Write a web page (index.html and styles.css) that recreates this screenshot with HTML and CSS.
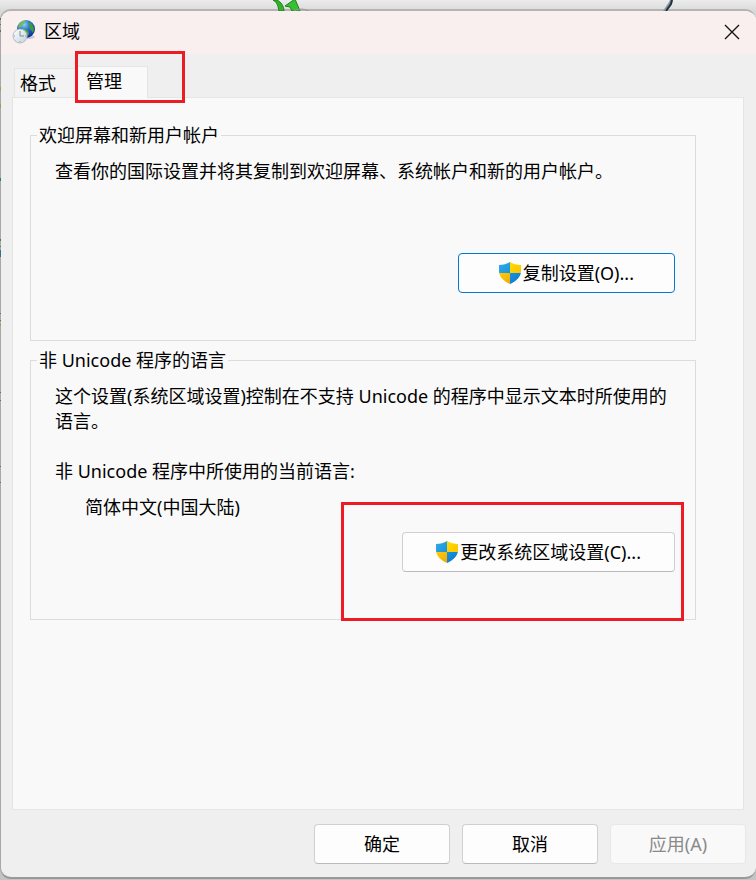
FILE: index.html
```html
<!DOCTYPE html>
<html lang="zh-CN">
<head>
<meta charset="utf-8">
<meta name="viewport" content="width=device-width, initial-scale=1">
<title>区域</title>
<link rel="stylesheet" href="styles.css">
</head>
<body>
<svg class="symbols" width="0" height="0" aria-hidden="true">
  <defs>
    <linearGradient id="blue" x1="0" y1="0" x2="1" y2="1"><stop offset="0" stop-color="#35a9e6"/><stop offset="1" stop-color="#1795df"/></linearGradient>
    <linearGradient id="deep" x1="0" y1="0" x2="1" y2="1"><stop offset="0" stop-color="#1793e4"/><stop offset="1" stop-color="#0b72c4"/></linearGradient>
    <linearGradient id="gold" x1="0" y1="0" x2="1" y2="1"><stop offset="0" stop-color="#ffdc00"/><stop offset="1" stop-color="#fcc400"/></linearGradient>
    <linearGradient id="amber" x1="0" y1="0" x2="1" y2="1"><stop offset="0" stop-color="#ffce05"/><stop offset="1" stop-color="#f0a80a"/></linearGradient>
    <clipPath id="shield-shape"><path d="M11 0C8 2 4 3 0 3V9C0 15 5 19.500 11 22C17 19.500 22 15 22 9V3C18 3 14 2 11 0Z"/></clipPath>
    <symbol id="shield" viewBox="0 0 22 22">
      <g clip-path="url(#shield-shape)">
        <rect width="11" height="11" fill="url(#blue)"/>
        <rect x="11" width="11" height="11" fill="url(#gold)"/>
        <rect y="11" width="11" height="11" fill="url(#amber)"/>
        <rect x="11" y="11" width="11" height="11" fill="url(#deep)"/>
      </g>
    </symbol>
  </defs>
</svg>
<svg class="desk-arrow" viewBox="0 0 40 11" aria-hidden="true">
  <path d="M1 0C6 3 6 7 7 11H12C12 6 9 2 5 0Z" fill="#32b22c" stroke="#217f20"/>
  <path d="M13 6L23 -1L28 11H20L18 7Z" fill="#39c032" stroke="#217f20"/>
  <path d="M22 11Q28 7 37 11" fill="none" stroke="#999"/>
</svg>
<svg class="desk-pen" viewBox="0 0 12 11" aria-hidden="true">
  <path d="M1 11L7 2L8 0H11L10 3L4 11Z" fill="#7f98a8"/>
  <path d="M4 11L9 4L10 0" fill="none" stroke="#26313a" stroke-width="2"/>
</svg>
<svg class="desk-edge" viewBox="0 0 1 500" aria-hidden="true">
  <path d="M.5 18V20M.5 24V25M.5 30V32M.5 239V241M.5 246V247M.5 313V314M.5 320V321M.5 392V393M.5 400V401M.5 466V467M.5 482V483" stroke="#4a8050"/>
  <path d="M.5 87V91M.5 104V108M.5 324V326" stroke="#a99a4c"/>
  <path d="M.5 178V181M.5 250V257" stroke="#2f7482"/>
</svg>
<main class="window">
  <header class="titlebar">
    <svg class="app-icon" viewBox="0 0 24 24" aria-hidden="true">
      <defs>
        <radialGradient id="ocean" cx=".4" cy=".25" r=".8"><stop offset="0" stop-color="#8fd0f5"/><stop offset=".4" stop-color="#2c74d4"/><stop offset="1" stop-color="#0d2390"/></radialGradient>
        <linearGradient id="dial" x1="0" y1="0" x2="1" y2="1"><stop offset="0" stop-color="#fff"/><stop offset="1" stop-color="#c4d2da"/></linearGradient>
      </defs>
      <ellipse cx="15" cy="17" rx="8" ry="2" fill="#9ba4bd" opacity=".5"/>
      <circle cx="14" cy="9" r="9" fill="url(#ocean)"/>
      <path d="M8 3Q11 0 14 1L13 3L10 5L9 7L6 8Q6 5 8 3Z" fill="#72bd55"/>
      <path d="M17 2Q21 4 22 9L21 13L19 10L17 8L18 6L16 4Z" fill="#3c9c37"/>
      <path d="M11 8L15 10L17 13L16 16L13 13Z" fill="#46aa3d"/>
      <circle cx="8" cy="16" r="7" fill="url(#dial)" stroke="#b3bac1"/>
      <path d="M8 11V16H12" fill="none" stroke="#7b8e9c"/>
      <path d="M8 21V22M2 16H3M13 16H14" stroke="#8c9aa5"/>
    </svg>
    <h1 class="title">区域</h1>
    <button class="close" type="button" aria-label="关闭">
      <svg viewBox="0 0 16 16" aria-hidden="true"><path d="M1 1L15 15M15 1L1 15" stroke="#151515" stroke-width="1.400" fill="none"/></svg>
    </button>
  </header>
  <nav class="tabs" role="tablist">
    <button class="tab" type="button" role="tab" aria-selected="false">格式</button>
    <div class="marked marked-tab">
      <button class="tab tab-active" type="button" role="tab" aria-selected="true">管理</button>
    </div>
  </nav>
  <section class="panel" role="tabpanel">
    <fieldset class="group">
      <legend>欢迎屏幕和新用户帐户</legend>
      <p class="copy-text">查看你的国际设置并将其复制到欢迎屏幕、系统帐户和新的用户帐户。</p>
      <div class="action">
        <button class="btn btn-copy" type="button"><svg class="shield" aria-hidden="true"><use href="#shield"/></svg>复制设置(O)...</button>
      </div>
    </fieldset>
    <fieldset class="group">
      <legend>非 Unicode 程序的语言</legend>
      <p class="locale-text">这个设置(系统区域设置)控制在不支持 Unicode 的程序中显示文本时所使用的语言。</p>
      <p>非 Unicode 程序中所使用的当前语言:</p>
      <p class="locale">简体中文(中国大陆)</p>
      <div class="action">
        <div class="marked marked-button">
          <button class="btn btn-locale" type="button"><svg class="shield" aria-hidden="true"><use href="#shield"/></svg>更改系统区域设置(C)...</button>
        </div>
      </div>
    </fieldset>
  </section>
  <footer class="footer">
    <button class="btn" type="button">确定</button>
    <button class="btn" type="button">取消</button>
    <button class="btn" type="button" disabled>应用(A)</button>
  </footer>
</main>
</body>
</html>
```

FILE: styles.css
```css
* {
  box-sizing: border-box;
}

body {
  display: flex;
  min-height: 100vh;
  margin: 0;
  padding: 9px 0 1px;
  background: linear-gradient(#ececec, #d8d8d8 12px, #c4c4c4);
  color: #000;
  font: 18px/25px "Noto Sans", "Noto Sans CJK SC", sans-serif;
}

button {
  padding: 0;
  color: inherit;
  font: inherit;
}

h1,
p {
  margin: 0;
}

.symbols,
.desk-arrow,
.desk-pen,
.desk-edge {
  position: absolute;
  top: 0;
}

.desk-arrow {
  left: 272px;
  width: 40px;
  height: 11px;
}

.desk-pen {
  right: 82px;
  width: 12px;
  height: 11px;
}

.desk-edge {
  left: 0;
  width: 1px;
  height: 500px;
}

.window {
  display: flex;
  flex: 1;
  flex-direction: column;
  overflow: hidden;
  border: solid #a8a8a8;
  border-width: 2px 0 2px 1px;
  border-top-color: #b4b4b4;
  border-bottom-color: #999;
  border-radius: 11px;
  background: #efefef;
}

.titlebar {
  display: flex;
  align-items: center;
  height: 43px;
  padding: 0 14px 2px 11px;
  background: #f9efef;
}

.app-icon {
  width: 24px;
  height: 24px;
}

.title {
  flex: 1;
  margin-left: 8px;
  font-size: 18px;
  font-weight: 400;
}

.close {
  display: flex;
  padding: 2px;
  border: 0;
  background: none;
}

.close svg {
  width: 16px;
  height: 16px;
}

.tabs {
  display: flex;
  align-items: flex-end;
  height: 43px;
  padding-left: 13px;
}

.tab {
  height: 29px;
  padding: 0 20px 0 5px;
  border: 1px solid #e5e5e5;
  border-bottom: 0;
  background: #f3f3f3;
}

.tab-active {
  display: block;
  height: 32px;
  padding: 0 25px 2px 8px;
  background: #f9f9f9;
}

.marked {
  position: relative;
}

.marked::after {
  position: absolute;
  border: 3px solid #ed1c24;
  content: "";
  pointer-events: none;
}

.marked-tab {
  margin-bottom: -1px;
}

.marked-tab::after {
  inset: -15px -37px -5px -2px;
}

.marked-button::after {
  inset: -30px -9px -49px -61px;
}

.panel {
  flex: 1;
  margin: 0 12px 0 11px;
  padding: 25px 47px 25px 17px;
  border: 1px solid #e5e5e5;
  background: #f9f9f9;
}

.group {
  min-width: 0;
  margin: 0 0 7px;
  padding: 11px 20px 47px 24px;
  border: 1px solid #dcdcdc;
}

.group legend {
  margin-left: -18px;
  padding: 0 2px;
}

.copy-text {
  margin-bottom: 69px;
}

.locale-text {
  margin-bottom: 25px;
}

.locale {
  margin: 11px 0 12px 30px;
}

.action {
  display: flex;
  justify-content: flex-end;
}

.btn {
  display: flex;
  align-items: center;
  justify-content: center;
  min-width: 136px;
  height: 40px;
  border: 1px solid #d0d0d0;
  border-bottom-color: #bababa;
  border-radius: 4px;
  background: #fdfdfd;
}

.btn:disabled {
  border-color: #e8e8e8;
  background: #f9f9f9;
  color: #8a8a8a;
}

.btn-copy {
  padding: 0 40px;
  border-color: #0078d4;
}

.btn-locale {
  padding: 0 33px;
}

.shield {
  width: 22px;
  height: 22px;
  margin-right: 2px;
}

.footer {
  display: flex;
  justify-content: flex-end;
  gap: 12px;
  padding: 14px 10px 13px;
}
```
